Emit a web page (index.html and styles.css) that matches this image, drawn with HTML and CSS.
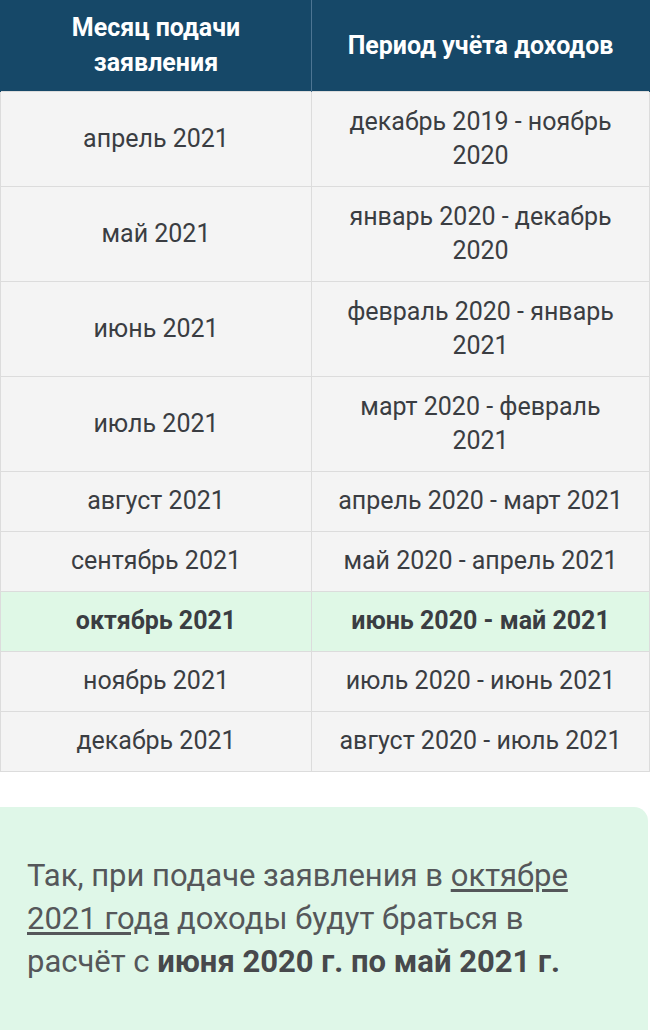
FILE: index.html
```html
<!DOCTYPE html>
<html lang="ru">
<head>
<meta charset="utf-8">
<link rel="stylesheet" href="styles.css">
</head>
<body>
<table class="periods">
  <thead>
    <tr>
      <th class="col-month">Месяц подачи<br>заявления</th>
      <th class="col-period">Период учёта доходов</th>
    </tr>
  </thead>
  <tbody>
    <tr class="tall"><td>апрель 2021</td><td>декабрь 2019 - ноябрь<br>2020</td></tr>
    <tr class="tall"><td>май 2021</td><td>январь 2020 - декабрь<br>2020</td></tr>
    <tr class="tall"><td>июнь 2021</td><td>февраль 2020 - январь<br>2021</td></tr>
    <tr class="tall"><td>июль 2021</td><td>март 2020 - февраль<br>2021</td></tr>
    <tr><td>август 2021</td><td>апрель 2020 - март 2021</td></tr>
    <tr><td>сентябрь 2021</td><td>май 2020 - апрель 2021</td></tr>
    <tr class="current"><td>октябрь 2021</td><td>июнь 2020 - май 2021</td></tr>
    <tr><td>ноябрь 2021</td><td>июль 2020 - июнь 2021</td></tr>
    <tr><td>декабрь 2021</td><td>август 2020 - июль 2021</td></tr>
  </tbody>
</table>
<div class="note">
  <p>Так, при подаче заявления в <a href="#" class="link">октябре 2021 года</a> доходы будут браться в расчёт с <strong>июня 2020 г. по май 2021 г.</strong></p>
</div>
</body>
</html>
```
FILE: styles.css
```css
html, body {
  margin: 0;
  padding: 0;
  background: #ffffff;
}
body {
  font-family: Roboto, "Liberation Sans", sans-serif;
  width: 650px;
}
.periods {
  width: 650px;
  border-collapse: collapse;
  table-layout: fixed;
}
.col-month { width: 294px; }
.periods th {
  background: #164868;
  color: #ffffff;
  font-weight: 700;
  font-size: 25px;
  line-height: 35px;
  padding: 10px 8px 11px;
  text-align: center;
  border-left: 1px solid #4d7593;
}
.periods th:first-child { border-left: 1px solid #164868; }
.periods th:last-child { border-right: 1px solid #164868; }
.periods td {
  background: #f4f4f4;
  color: #3a3d42;
  font-size: 25px;
  line-height: 34px;
  padding: 12px 8px 13px;
  text-align: center;
  border: 1px solid #dcdcdc;
}
.periods tr.tall td {
  padding-top: 13px;
  padding-bottom: 13px;
}
.periods tr.current td {
  background: #dff8e6;
  font-weight: 700;
}
.note {
  margin-top: 35px;
  background: #dff7e8;
  border-radius: 0 14px 0 0;
  width: 648px;
  padding: 47px 50px 50px 27px;
  box-sizing: border-box;
}
.note p {
  margin: 0;
  font-size: 31px;
  line-height: 43px;
  color: #55575a;
}
.note .link {
  color: #55575a;
  text-decoration: underline;
  text-underline-offset: 3px;
}
.note strong {
  font-weight: 700;
  color: #47494c;
}
```
